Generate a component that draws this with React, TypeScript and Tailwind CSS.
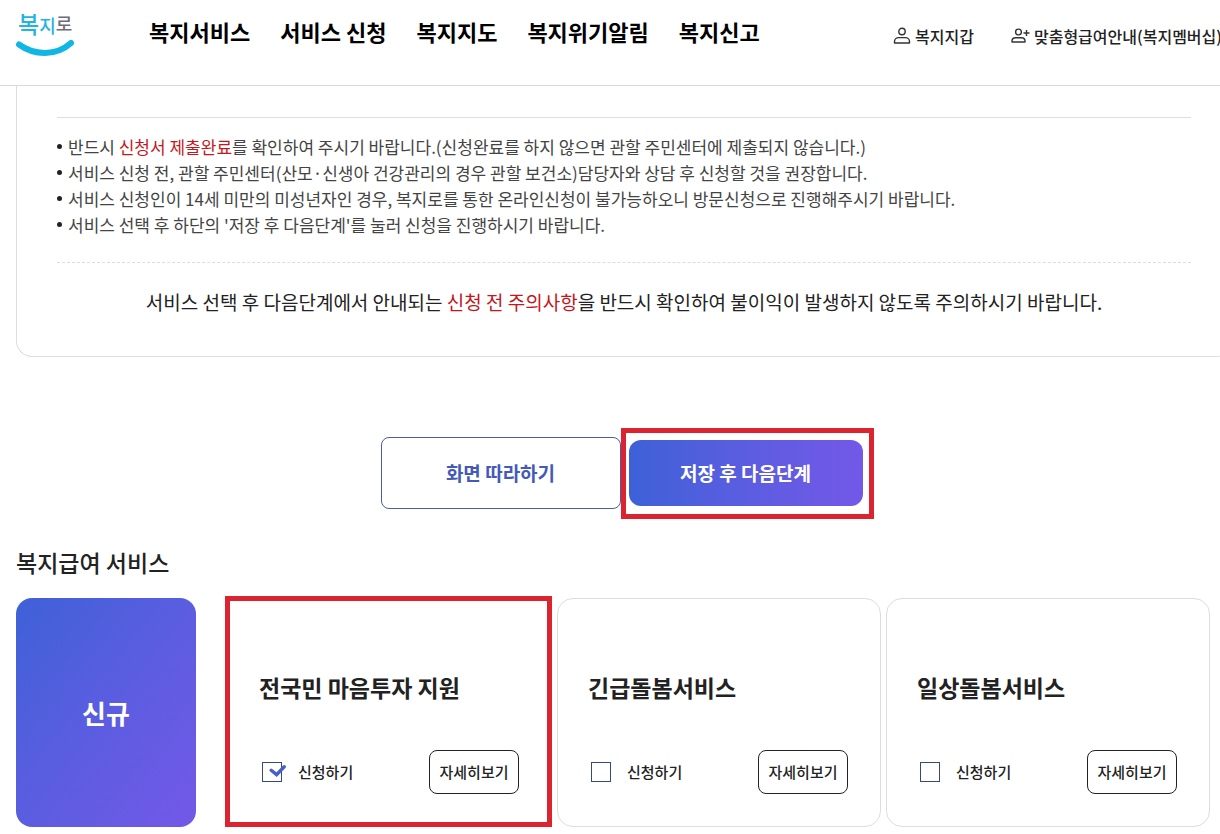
import { useState } from 'react';

const menus = ['복지서비스', '서비스 신청', '복지지도', '복지위기알림', '복지신고'];

const services = [
  { id: 'mind', name: '전국민 마음투자 지원', highlighted: true },
  { id: 'urgent', name: '긴급돌봄서비스', highlighted: false },
  { id: 'daily', name: '일상돌봄서비스', highlighted: false },
];

const Logo = () => (
  <svg className="overflow-visible" width="60" height="54" viewBox="0 0 60 54" role="img" aria-label="복지로">
    <text x="2" y="29" fontFamily="'Noto Sans CJK KR', sans-serif" fontWeight="500" fill="#1fb4e2">
      <tspan fontSize="23">복</tspan>
      <tspan fontSize="18">지</tspan>
      <tspan fontSize="18" dy="-2" fill="#6f6c78">로</tspan>
    </text>
    <path d="M3 40.5C18 51.5 40 52.5 55 39" fill="none" stroke="#12b6e4" strokeWidth="6" strokeLinecap="round" />
  </svg>
);

const UserIcon = () => (
  <svg width="18" height="18" viewBox="0 0 18 18" fill="none" stroke="#333" strokeWidth="1.4" aria-hidden="true">
    <circle cx="9" cy="4.5" r="3.2" />
    <path d="M1.5 16v-1.4c0-2.4 1.9-4 4.2-4h6.6c2.3 0 4.2 1.6 4.2 4V16z" strokeLinejoin="round" />
  </svg>
);

const UserPlusIcon = () => (
  <svg width="19" height="18" viewBox="0 0 19 18" fill="none" stroke="#333" strokeWidth="1.4" aria-hidden="true">
    <circle cx="7.5" cy="5" r="2.9" />
    <path d="M1 15v-.9c0-2.1 1.6-3.4 3.6-3.4h5.8c2 0 3.6 1.3 3.6 3.4v.9z" strokeLinejoin="round" />
    <path d="M12.5 6h6M15.5 3v6" />
  </svg>
);

const Header = () => (
  <header className="flex h-[86px] items-start whitespace-nowrap border-b border-[#d9d9d9] pl-4">
    <a href="#home" className="w-[133px] shrink-0 pt-1">
      <Logo />
    </a>
    <nav className="flex gap-[30px] pt-[15px]">
      {menus.map((menu) => (
        <a key={menu} href="#menu" className="text-[22px] font-bold leading-8 text-black">
          {menu}
        </a>
      ))}
    </nav>
    <div className="-mr-0.5 ml-auto flex gap-[37px] pt-6 text-base font-medium leading-6 text-[#222]">
      <a href="#wallet" className="flex items-center gap-1">
        <UserIcon />
        복지지갑
      </a>
      <a href="#membership" className="flex items-center gap-1">
        <UserPlusIcon />
        맞춤형급여안내(복지멤버십)
      </a>
    </div>
  </header>
);

const Dot = () => <span className="mb-0.5 size-[5px] shrink-0 rounded-full bg-[#222]" />;

const Notice = () => (
  <section className="-mr-3 ml-4 rounded-b-2xl border border-t-0 border-[#ddd] px-10 pb-[38px] pt-[31px]">
    <ul className="border-t border-[#ddd] pb-6 pt-4 text-[17px] leading-[26px] text-[#444]">
      <li className="flex items-center gap-1.5">
        <Dot />
        <p>
          반드시 <span className="text-[#c4161c]">신청서 제출완료</span>를 확인하여 주시기 바랍니다.(신청완료를 하지 않으면 관할
          주민센터에 제출되지 않습니다.)
        </p>
      </li>
      <li className="flex items-center gap-1.5">
        <Dot />
        <p>서비스 신청 전, 관할 주민센터(산모·신생아 건강관리의 경우 관할 보건소)담당자와 상담 후 신청할 것을 권장합니다.</p>
      </li>
      <li className="flex items-center gap-1.5">
        <Dot />
        <p>서비스 신청인이 14세 미만의 미성년자인 경우, 복지로를 통한 온라인신청이 불가능하오니 방문신청으로 진행해주시기 바랍니다.</p>
      </li>
      <li className="flex items-center gap-1.5">
        <Dot />
        <p>서비스 선택 후 하단의 '저장 후 다음단계'를 눌러 신청을 진행하시기 바랍니다.</p>
      </li>
    </ul>
    <p className="border-t border-dashed border-[#ddd] pt-[23px] text-center text-[19px] leading-8 text-[#222]">
      서비스 선택 후 다음단계에서 안내되는 <span className="text-[#c4161c]">신청 전 주의사항</span>을 반드시 확인하여 불이익이
      발생하지 않도록 주의하시기 바랍니다.
    </p>
  </section>
);

type CardProps = {
  id: string;
  name: string;
  highlighted: boolean;
  checked: boolean;
  onToggle: () => void;
};

const ServiceCard = ({ id, name, highlighted, checked, onToggle }: CardProps) => (
  <article
    className={`relative flex flex-col justify-end rounded-2xl border pb-8 pl-[30px] pr-8 ${
      highlighted ? 'border-transparent' : 'border-[#ddd]'
    }`}
  >
    <h3 className="text-[23px] font-bold leading-8 text-[#222]">{name}</h3>
    <div className="mt-[47px] flex items-center justify-between">
      <div className="flex items-center gap-4 pl-[3px]">
        <span className="relative size-5">
          <input
            id={id}
            type="checkbox"
            checked={checked}
            onChange={onToggle}
            className="block size-5 appearance-none border border-[#34497e] bg-white"
          />
          {checked && (
            <svg
              className="pointer-events-none absolute left-[7px] top-0.5"
              width="18"
              height="14"
              viewBox="0 0 18 14"
              fill="none"
              stroke="#4a5fc1"
              strokeWidth="3.4"
              strokeLinecap="round"
              aria-hidden="true"
            >
              <path d="M2.2 6.2L7.6 10.6L15.2 2.8" />
            </svg>
          )}
        </span>
        <label htmlFor={id} className="text-[15px] font-medium text-[#222]">
          신청하기
        </label>
      </div>
      <button type="button" className="h-11 w-[90px] rounded-lg border border-[#222] text-[15px] font-medium text-[#222]">
        자세히보기
      </button>
    </div>
    {/* Guide frame */}
    {highlighted && <div className="pointer-events-none absolute -bottom-px -left-1 -right-px -top-[3px] border-5 border-[#dc2430]" />}
  </article>
);

export default function App() {
  const [selected, setSelected] = useState<string[]>(['mind']);

  const toggle = (id: string) => {
    setSelected((prev) => (prev.includes(id) ? prev.filter((item) => item !== id) : [...prev, id]));
  };

  return (
    <div className="overflow-hidden bg-white pb-[7px] font-['Noto_Sans_CJK_KR',sans-serif]">
      <Header />
      <main>
        <Notice />

        <div className="-mr-[26px] mt-20 flex justify-center gap-[5px]">
          <button
            type="button"
            className="h-[72px] w-60 rounded-lg border border-[#4a5da0] text-[19px] font-bold text-[#4559b8]"
          >
            화면 따라하기
          </button>
          <div className="relative">
            <button
              type="button"
              className="m-[3px] h-[66px] w-[234px] rounded-xl bg-linear-to-r from-[#3d61d8] to-[#7358e8] text-[19px] font-bold text-white"
            >
              저장 후 다음단계
            </button>
            <div className="pointer-events-none absolute -bottom-2.5 -left-[5px] -right-2 -top-[9px] border-5 border-[#dc2430]" />
          </div>
        </div>

        <h2 className="ml-4 mt-[37px] text-[23px] font-medium leading-8 text-[#222]">복지급여 서비스</h2>
        <div className="mt-5 flex gap-8 pl-4 pr-2.5">
          <div className="flex h-[229px] w-[180px] shrink-0 items-center justify-center rounded-2xl bg-linear-to-br from-[#3d61d8] to-[#7358e8] text-[26px] font-bold text-white">
            신규
          </div>
          <div className="grid grow grid-cols-3 gap-[5px]">
            {services.map((service) => (
              <ServiceCard
                key={service.id}
                {...service}
                checked={selected.includes(service.id)}
                onToggle={() => toggle(service.id)}
              />
            ))}
          </div>
        </div>
      </main>
    </div>
  );
}
